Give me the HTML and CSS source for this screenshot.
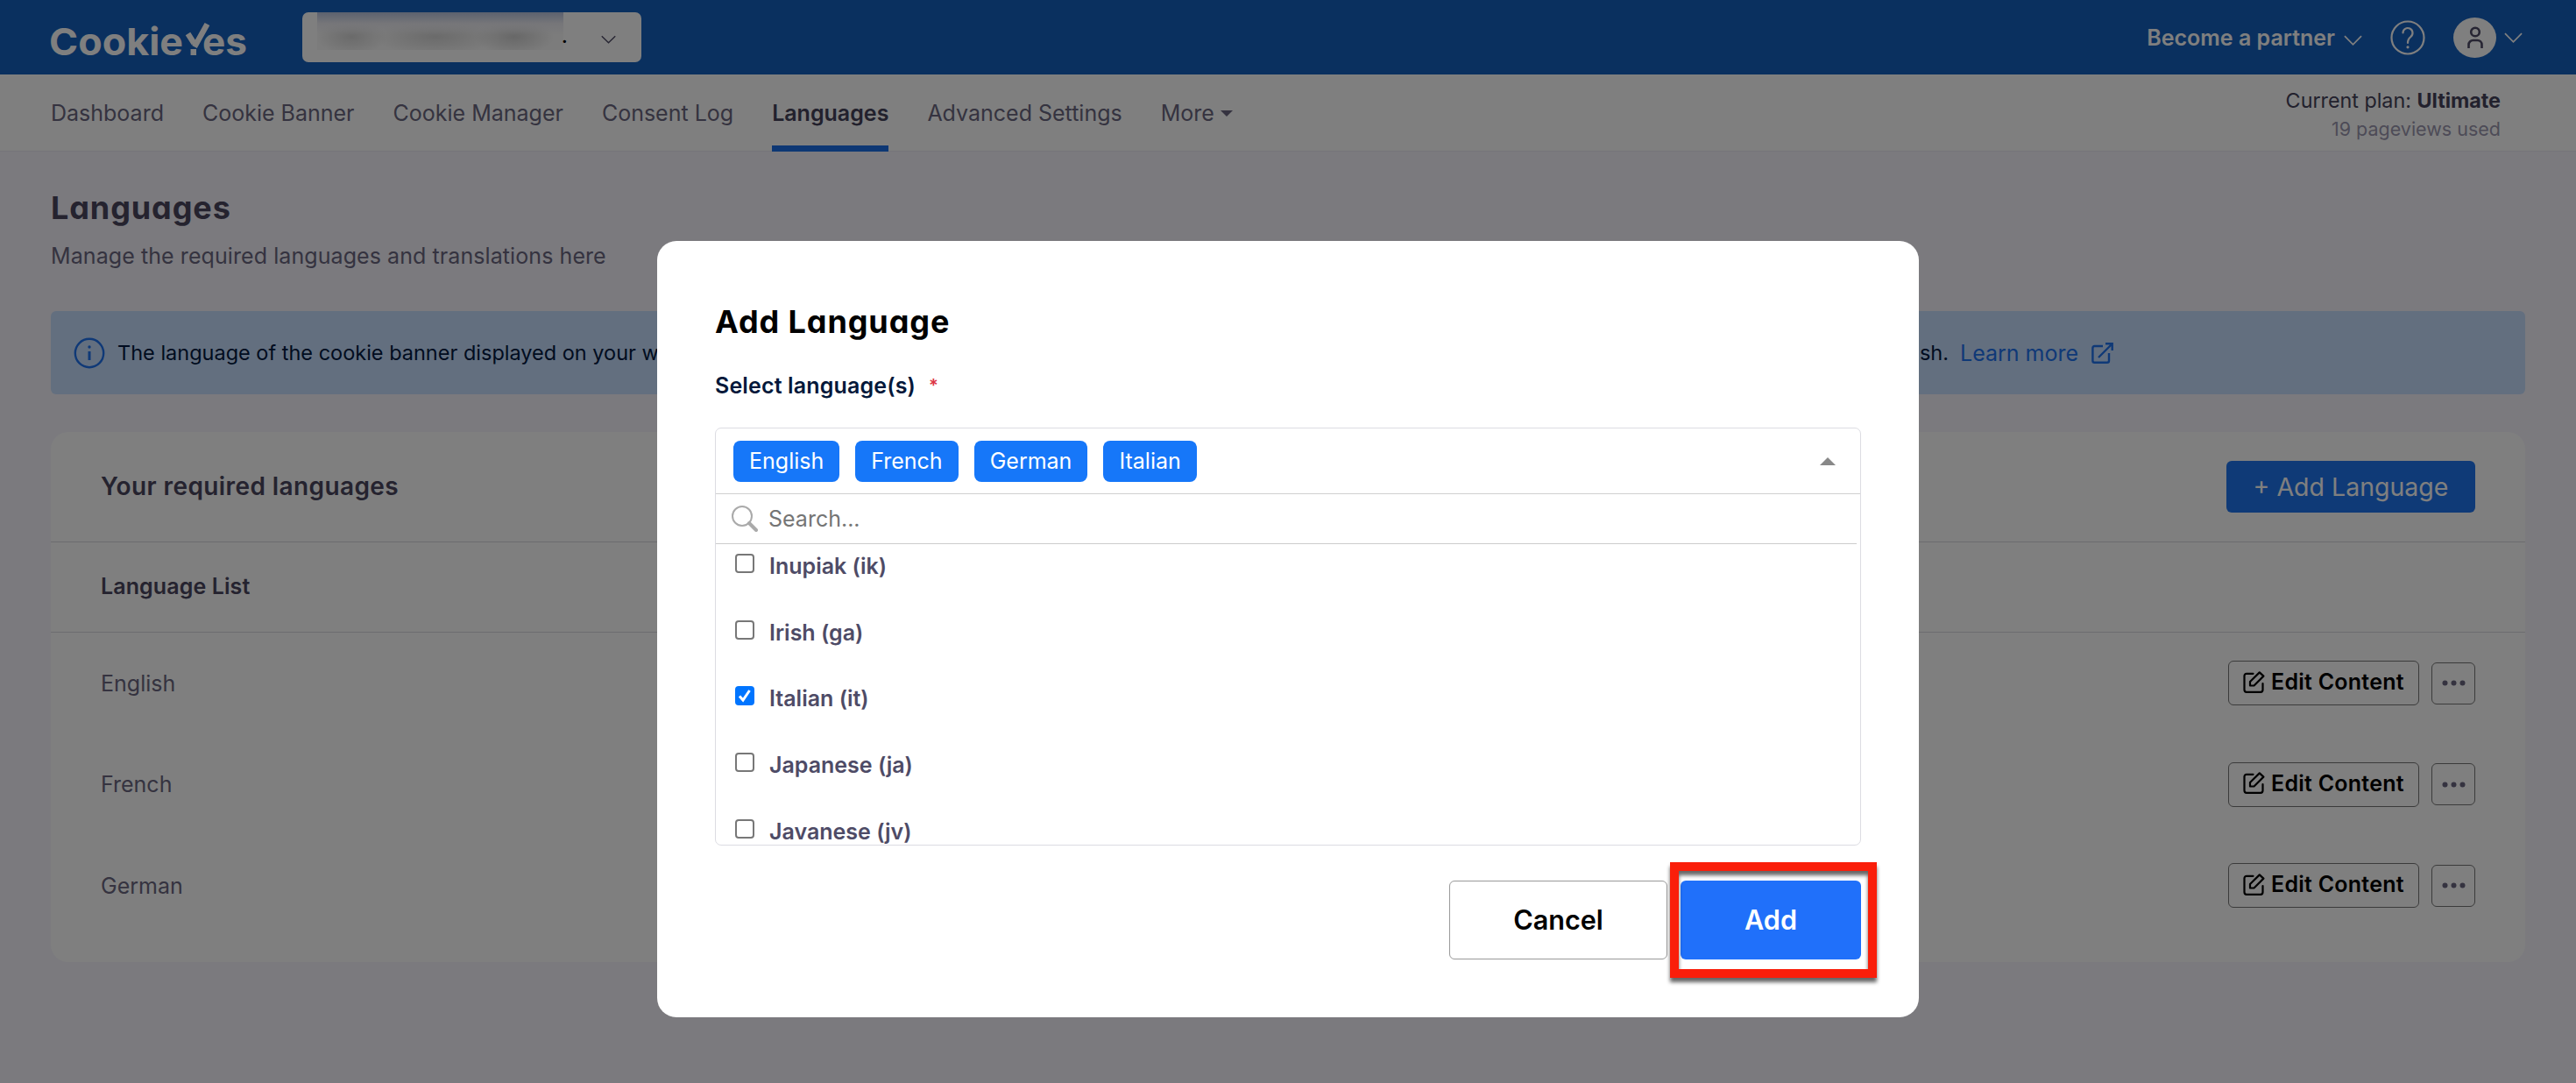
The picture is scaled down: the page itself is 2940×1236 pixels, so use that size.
FILE: index.html
```html
<!DOCTYPE html>
<html lang="en">
<head>
<meta charset="utf-8">
<title>Languages</title>
<link rel="stylesheet" href="styles.css">
</head>
<body>
<svg class="defs" aria-hidden="true">
  <symbol id="chev" viewBox="0 0 22 12"><path d="M1 1l10 10L21 1" fill="none" stroke="currentColor" stroke-width="1.8"/></symbol>
  <symbol id="edit" viewBox="0 0 25 25"><g fill="none" stroke="currentColor" stroke-width="2.2" stroke-linejoin="round" stroke-linecap="round"><path d="M11.500 2.800H4a2.500 2.500 0 0 0-2.500 2.500v16a2.500 2.500 0 0 0 2.500 2.500H20a2.500 2.500 0 0 0 2.500-2.500V14"/><path d="M8 16.500v-4.500L18.800 1.400l4.600 4.200L12.500 16.500z"/></g></symbol>
  <symbol id="dots" viewBox="0 0 27 7"><g fill="currentColor"><circle cx="3.500" cy="3.500" r="3"/><circle cx="13.500" cy="3.500" r="3"/><circle cx="23.500" cy="3.500" r="3"/></g></symbol>
</svg>
<div class="page">
  <header class="topbar">
    <svg class="logo" viewBox="0 0 224 50">
      <g class="logo-text"><text x="-2" y="44.500" textLength="153" lengthAdjust="spacingAndGlyphs">Cookie</text><text x="173" y="44.500" textLength="51" lengthAdjust="spacingAndGlyphs">es</text></g>
      <path class="logo-y" d="M156.500 20.500l7 11M178.500 9.500L164 35.500M162.800 38v7"/>
    </svg>
    <div class="site"><span class="redacted"></span><span class="dot">.</span><svg class="chev-dark"><use href="#chev"/></svg></div>
    <div class="account">
      <span class="partner">Become a partner</span><svg class="chev"><use href="#chev"/></svg>
      <svg class="help" viewBox="0 0 40 40"><g fill="none" stroke="currentColor"><circle cx="20" cy="20" r="18.500" stroke-width="2.200"/><path d="M14.500 14.500a5.500 5.500 0 1 1 9 4.300c-2.300 1.800-3.500 3.200-3.500 7.200" stroke-width="2.200" stroke-linecap="round"/></g><circle cx="20" cy="30.800" r="1.600" fill="currentColor"/></svg>
      <span class="avatar"><svg viewBox="0 0 18 26"><g fill="none" stroke="currentColor" stroke-width="2.600"><circle cx="9" cy="6.500" r="4.800"/><path d="M1.500 25v-4a5 5 0 0 1 5-5h5a5 5 0 0 1 5 5v4"/></g></svg></span>
      <svg class="chev last"><use href="#chev"/></svg>
    </div>
  </header>
  <nav class="nav">
    <a>Dashboard</a><a>Cookie Banner</a><a>Cookie Manager</a><a>Consent Log</a><a class="active">Languages</a><a>Advanced Settings</a><a>More<i class="caret"></i></a>
    <div class="plan"><div>Current plan: <b>Ultimate</b></div><small>19 pageviews used</small></div>
  </nav>
  <main>
    <h1>Languages</h1>
    <p class="sub">Manage the required languages and translations here</p>
    <div class="notice">
      <svg class="info" viewBox="0 0 36 36"><circle cx="18" cy="18" r="16.200" fill="none" stroke="currentColor" stroke-width="2.400"/><circle cx="18" cy="11" r="1.700" fill="currentColor"/><path d="M18 16v10" stroke="currentColor" stroke-width="3"/></svg>
      <div class="notice-text"><span>The language of the cookie banner displayed on your website</span><span>English.</span></div>
      <a>Learn more</a>
      <svg class="ext" viewBox="0 0 25 24"><g fill="none" stroke="currentColor" stroke-width="2.400"><path d="M13 4H3.400a2 2 0 0 0-2 2v14.800a2 2 0 0 0 2 2H18a2 2 0 0 0 2-2V12M8 17L23 2M16 1.300h7.700V9"/></g></svg>
    </div>
    <section class="card">
      <div class="card-head"><h2>Your required languages</h2><button class="add-lang">+ Add Language</button></div>
      <div class="list-head">Language List</div>
      <div class="rows">
        <div class="row"><span>English</span><button class="edit"><svg><use href="#edit"/></svg>Edit Content</button><button class="more"><svg><use href="#dots"/></svg></button></div>
        <div class="row"><span>French</span><button class="edit"><svg><use href="#edit"/></svg>Edit Content</button><button class="more"><svg><use href="#dots"/></svg></button></div>
        <div class="row"><span>German</span><button class="edit"><svg><use href="#edit"/></svg>Edit Content</button><button class="more"><svg><use href="#dots"/></svg></button></div>
      </div>
    </section>
  </main>
</div>
<div class="overlay">
  <div class="modal">
    <h3>Add Language</h3>
    <label class="field">Select language(s)<i>*</i></label>
    <div class="select">
      <div class="chips"><span>English</span><span>French</span><span>German</span><span>Italian</span><i class="caret-up"></i></div>
      <div class="search"><svg viewBox="0 0 30 30"><circle cx="12" cy="12" r="11" fill="none" stroke="currentColor" stroke-width="2"/><path d="M20 20l8 8" stroke="currentColor" stroke-width="4" stroke-linecap="round"/></svg>Search...</div>
      <div class="options">
        <div class="opt"><i class="box"></i>Inupiak (ik)</div>
        <div class="opt"><i class="box"></i>Irish (ga)</div>
        <div class="opt"><i class="box on"><svg viewBox="0 0 22 22"><path d="M5 11.500l4 4.500 7.500-11" fill="none" stroke="#fff" stroke-width="3"/></svg></i>Italian (it)</div>
        <div class="opt"><i class="box"></i>Japanese (ja)</div>
        <div class="opt"><i class="box"></i>Javanese (jv)</div>
      </div>
    </div>
    <div class="actions"><button class="cancel">Cancel</button><div class="add-wrap"><button class="add">Add</button><span class="callout"></span></div></div>
  </div>
</div>
</body>
</html>
```

FILE: styles.css
```css
* { box-sizing: border-box; }
body { margin: 0; font-family: Inter, "Liberation Sans", sans-serif; font-size: 25px; line-height: 30px; width: 2940px; height: 1236px; overflow: hidden; color: #6a6780; }
h1, h2, h3, p { margin: 0; }
button { font: inherit; letter-spacing: inherit; margin: 0; padding: 0; background: none; border: 0; color: inherit; white-space: nowrap; }
svg { flex: none; }
.defs { position: absolute; width: 0; height: 0; }
.page { background: #f6f5fd; height: 1236px; }

.topbar { height: 85px; background: #1560bf; display: flex; align-items: center; padding: 0 61px 0 58px; color: #fff; }
.logo { width: 224px; height: 50px; overflow: visible; }
.logo-text { font: 750 43px Inter, sans-serif; fill: #fff; }
.logo-y { fill: none; stroke: #fff; stroke-width: 6.5; }
.site { margin-left: 63px; width: 387px; height: 57px; background: #fff; border-radius: 7px; overflow: hidden; display: flex; color: #4e4b66; }
.redacted { margin-left: 17px; width: 281px; height: 43px; background: linear-gradient(#b9c3de, #ededf3 30%, #fff0 60%), radial-gradient(ellipse 40px 20px at 14% 65%, #d6d6d6, #fff0), radial-gradient(ellipse 70px 20px at 48% 65%, #d6d6d6, #fff0), radial-gradient(ellipse 45px 20px at 80% 65%, #d0d0d0, #fff0), #f8f8f8; }
.dot { color: #000; line-height: 56px; font-weight: 700; width: 8px; font-size: 20px; margin: 0 37px 0 -2px; }
.chev-dark { width: 17px; height: 10px; margin-top: 26px; }
.account { margin-left: auto; display: flex; align-items: center; font-weight: 600; }
.chev { width: 21px; height: 12px; margin: 6px 0 0 10px; }
.chev.last { margin: 0 0 0 9px; }
.help { width: 40px; height: 40px; margin: 1px 0 0 32px; }
.avatar { width: 49px; height: 46px; margin-left: 32px; border-radius: 50%; background: #fff; color: #4e4b66; display: flex; align-items: center; justify-content: center; }
.avatar svg { width: 18px; height: 26px; }

.nav { height: 88px; background: #fff; display: flex; gap: 44px; padding: 0 86px 0 58px; border-bottom: 1px solid #eceaf2; }
.nav a { line-height: 88px; height: 88px; border-bottom: 7px solid transparent; white-space: nowrap; }
.nav .active { font-weight: 600; color: #45425a; border-color: #1b6fe8; }
.caret { display: inline-block; margin-left: 7px; vertical-align: 5px; border: 7px solid transparent; border-top-color: currentColor; border-bottom: 0; }
.plan { margin: 13px 0 0 auto; text-align: right; color: #45425a; font-size: 23.3px; line-height: 33px; }
.plan b { font-weight: 650; }
.plan small { font-size: 21.5px; color: #9a97ae; display: block; }

main { padding: 39px 58px 0; }
h1 { font-size: 36px; font-weight: 650; line-height: 50px; letter-spacing: .9px; color: #4a465f; font-feature-settings: "cv11", "ss01"; }
.sub { margin-top: 15px; line-height: 30px; letter-spacing: .08px; }
.notice { margin-top: 48px; height: 95px; background: #c7deff; border-radius: 6px; display: flex; align-items: center; padding-left: 26px; color: #001840; }
.info { width: 36px; height: 36px; color: #1f72ee; margin-right: 14px; }
.notice-text { width: 2090px; display: flex; justify-content: space-between; margin-right: 13px; font-size: 23.5px; }
.notice a, .ext { color: #1f72ee; }
.ext { width: 25px; height: 24px; margin-left: 15px; }
.card { margin-top: 43px; height: 605px; background: #fff; border-radius: 20px; }
.card-head { height: 126px; display: flex; align-items: center; justify-content: space-between; padding: 0 57px 0 57px; border-bottom: 1px solid #d8d8de; color: #4a465f; }
h2 { font-size: 28px; font-weight: 600; line-height: 28px; padding-bottom: 1px; letter-spacing: .4px; }
.add-lang { width: 284px; height: 59px; border-radius: 6px; background: #1f75ef; color: #fff; font-size: 28.5px; }
.list-head { height: 103px; line-height: 100px; padding-left: 57px; font-weight: 600; letter-spacing: .1px; border-bottom: 1px solid #d8d8de; color: #4a465f; }
.row { height: 115.5px; display: flex; align-items: center; padding: 0 57px 0 57px; }
.row span { margin-right: auto; }
.edit { width: 218px; height: 51px; border: 1px solid #777; border-radius: 6px; font-weight: 600; letter-spacing: .25px; line-height: 46px; color: #000; display: flex; align-items: center; gap: 7px; padding: 0 0 3px 16px; }
.edit svg { width: 25px; height: 25px; }
.more { width: 50px; height: 48px; margin-left: 14px; border: 1px solid #777; border-radius: 6px; display: flex; align-items: center; justify-content: center; }
.more svg { width: 27px; height: 7px; }

.overlay { position: absolute; inset: 0; height: 1236px; width: 2940px; background: rgba(0,0,0,.5); padding-top: 275px; }
.modal { margin: 0 auto; width: 1440px; height: 886px; background: #fff; border-radius: 22px; padding: 67px 66px 0; }
h3 { font-size: 36px; line-height: 50px; font-weight: 650; letter-spacing: .9px; color: #000; font-feature-settings: "cv11", "ss01"; }
.field { display: flex; margin-top: 33px; font-weight: 600; letter-spacing: .15px; color: #04183a; line-height: 30px; }
.field i { color: #dc3545; font-style: normal; margin-left: 15px; font-size: 20px; }
.select { margin-top: 33px; height: 477px; border: 1px solid #dcdce2; border-radius: 7px; overflow: hidden; }
.chips { height: 75px; border-bottom: 1px solid #d0d0d0; display: flex; align-items: center; gap: 18px; padding: 0 28px 0 20px; }
.chips span { height: 47px; line-height: 46px; padding: 0 18px; border-radius: 8px; background: #1677f9; color: #fff; }
.caret-up { margin-left: auto; border: 9.5px solid transparent; border-bottom-color: #888; border-top: 0; }
.search { height: 57px; margin-right: 4px; border-bottom: 1px solid #ccc; display: flex; align-items: center; gap: 12px; padding-left: 18px; color: #757575; }
.search svg { width: 30px; height: 30px; color: #aaa; }
.opt { height: 75.7px; padding: 11px 0 0 22px; display: flex; gap: 17px; font-weight: 600; line-height: 29px; color: #4e4b66; }
.box { width: 22px; height: 22px; border: 2px solid #777; border-radius: 4px; }
.box.on { border: 0; background: #0075ff; }
.box svg { display: block; width: 22px; height: 22px; }
.actions { margin-top: 40px; display: flex; justify-content: flex-end; gap: 15px; font-size: 30.6px; font-weight: 600; }
.cancel { width: 249px; height: 90px; border: 1px solid #999; border-radius: 6px; color: #000; }
.add-wrap { position: relative; }
.add { width: 206px; height: 90px; border-radius: 6px; background: #2070fa; color: #fff; }
.callout { position: absolute; left: -12px; top: -21px; width: 236px; height: 132px; border: 10px solid #fa1e0a; filter: drop-shadow(0 5px 2px rgba(0,0,0,.6)); }
```
